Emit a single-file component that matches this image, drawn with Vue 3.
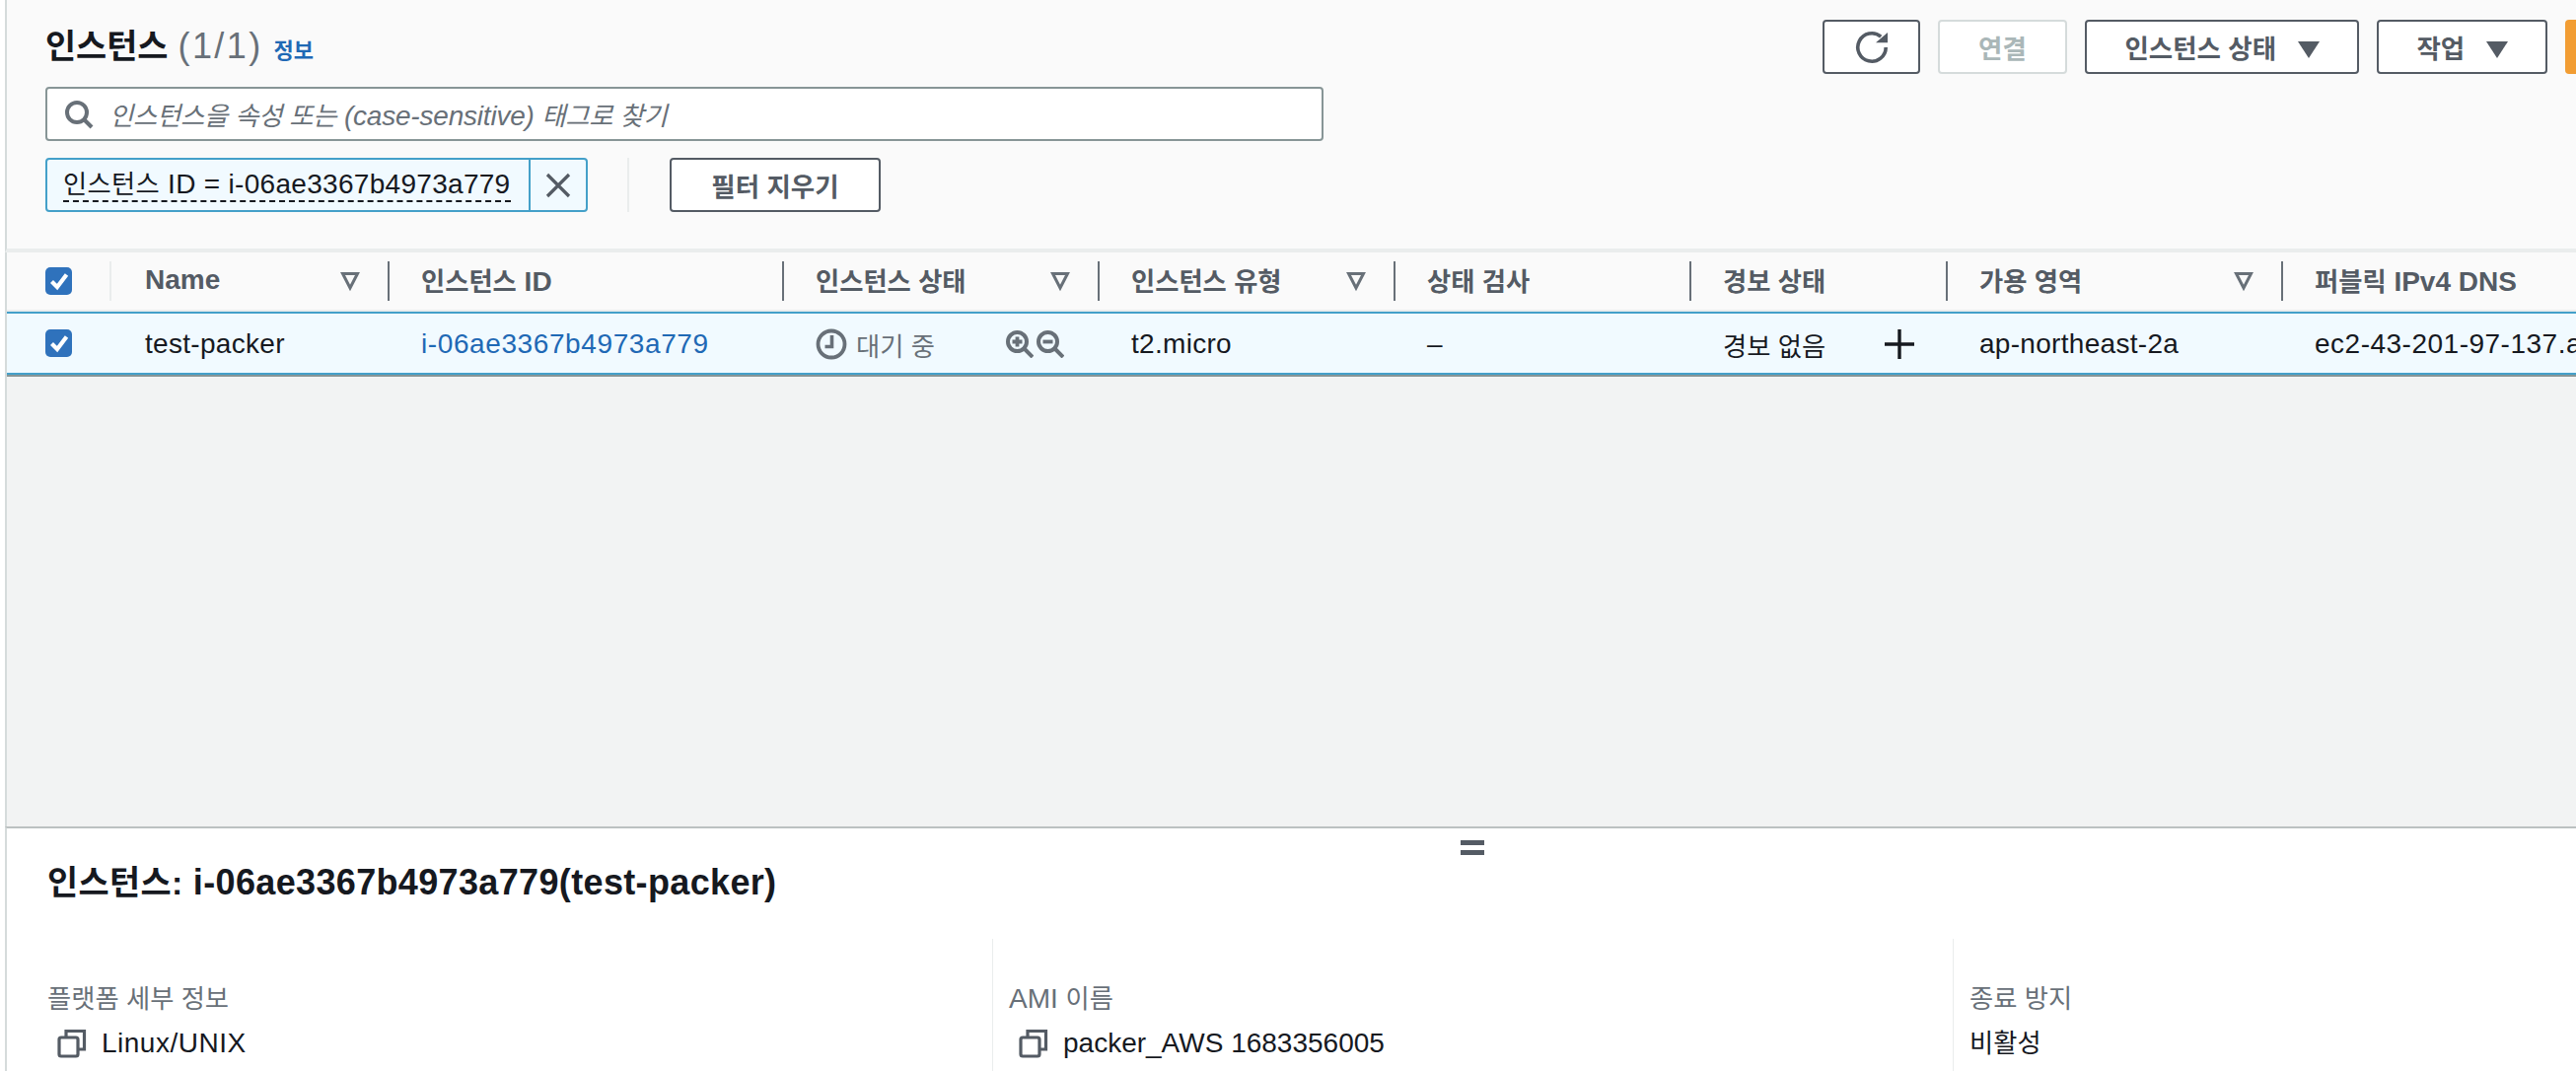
<script setup>
const columns = [
  { lat: 'Name', sort: true },
  { ko: '인스턴스', lat: ' ID' },
  { ko: '인스턴스 상태', sort: true },
  { ko: '인스턴스 유형', sort: true },
  { ko: '상태 검사' },
  { ko: '경보 상태' },
  { ko: '가용 영역', sort: true },
  { ko: '퍼블릭', lat: ' IPv4 DNS' },
]
</script>

<template>
  <div class="page">
    <section class="top">
      <div class="title-row">
        <div class="title">
          <h1><span class="ko">인스턴스</span> <span class="count">(1/1)</span></h1>
          <a class="info">정보</a>
        </div>
        <div class="actions">
          <button class="btn icon-btn" aria-label="새로 고침">
            <svg width="36" height="36" viewBox="0 0 36 36" fill="none">
              <path d="M32.2 18a14.2 14.2 0 1 1-5-10.8" stroke="#545b64" stroke-width="3.6" />
              <path d="M22 13.3h12V3z" fill="#545b64" />
            </svg>
          </button>
          <button class="btn disabled connect">연결</button>
          <button class="btn state">인스턴스 상태 <i class="caret"></i></button>
          <button class="btn act">작업 <i class="caret"></i></button>
          <button class="launch"></button>
        </div>
      </div>

      <div class="search">
        <svg width="32" height="32" viewBox="0 0 32 32" fill="none">
          <circle cx="14" cy="14" r="10" stroke="#687078" stroke-width="4" />
          <path d="M21 21l8 8" stroke="#687078" stroke-width="4" />
        </svg>
        <span><span class="ko">인스턴스을 속성 또는</span> (case-sensitive) <span class="ko">태그로 찾기</span></span>
      </div>

      <div class="filters">
        <div class="chip">
          <span class="chip-text"><span><span class="ko">인스턴스</span> ID = i-06ae3367b4973a779</span></span>
          <span class="chip-x">
            <svg width="28" height="28" viewBox="0 0 28 28" fill="none">
              <path d="M3 3l22 22M25 3L3 25" stroke="#545b64" stroke-width="3.2" />
            </svg>
          </span>
        </div>
        <i class="filter-divider"></i>
        <button class="btn clear">필터 지우기</button>
      </div>
    </section>

    <section class="table">
      <div class="grid head">
        <div class="cell check-cell">
          <span class="checkbox"><svg width="20" height="20" viewBox="0 0 20 20" fill="none"><path d="M2.5 10.5l5.5 5.5L17.5 3.5" stroke="#fff" stroke-width="4.2" /></svg></span>
        </div>
        <div v-for="c in columns" :key="(c.ko || '') + (c.lat || '')" class="cell head-cell">
          <span class="head-label"><span v-if="c.ko" class="ko">{{ c.ko }}</span>{{ c.lat }}</span>
          <svg v-if="c.sort" class="sort" width="20" height="22" viewBox="0 0 20 22" fill="none">
            <path d="M2.5 3.5h15L10 18z" stroke="#687078" stroke-width="3" />
          </svg>
        </div>
      </div>

      <div class="grid row">
        <div class="cell check-cell">
          <span class="checkbox"><svg width="20" height="20" viewBox="0 0 20 20" fill="none"><path d="M2.5 10.5l5.5 5.5L17.5 3.5" stroke="#fff" stroke-width="4.2" /></svg></span>
        </div>
        <div class="cell body-cell">test-packer</div>
        <div class="cell body-cell link">i-06ae3367b4973a779</div>
        <div class="cell body-cell status">
          <svg width="32" height="32" viewBox="0 0 32 32" fill="none">
            <circle cx="16" cy="16" r="13.5" stroke="#687078" stroke-width="3.8" />
            <path d="M16.5 7v11.5h-7" stroke="#687078" stroke-width="3.6" />
          </svg>
          <span class="pending ko">대기 중</span>
          <span class="zooms">
            <svg width="28" height="28" viewBox="0 0 28 28" fill="none">
              <circle cx="11.5" cy="11.5" r="9.5" stroke="#687078" stroke-width="4" />
              <path d="M18 18l9 9" stroke="#687078" stroke-width="4" />
              <path d="M6.5 11.5h10M11.5 6.5v10" stroke="#687078" stroke-width="3.8" />
            </svg>
            <svg width="28" height="28" viewBox="0 0 28 28" fill="none">
              <circle cx="11.5" cy="11.5" r="9.5" stroke="#687078" stroke-width="4" />
              <path d="M18 18l9 9" stroke="#687078" stroke-width="4" />
              <path d="M6.5 11.5h10" stroke="#687078" stroke-width="3.8" />
            </svg>
          </span>
        </div>
        <div class="cell body-cell">t2.micro</div>
        <div class="cell body-cell">–</div>
        <div class="cell body-cell alarm">
          <span class="ko">경보 없음</span>
          <svg width="30" height="30" viewBox="0 0 30 30" fill="none">
            <path d="M15 0v30M0 15h30" stroke="#16191f" stroke-width="3.4" />
          </svg>
        </div>
        <div class="cell body-cell">ap-northeast-2a</div>
        <div class="cell body-cell dns">ec2-43-201-97-137.ap-northeast-2.compute.amazonaws.com</div>
      </div>
      <div class="empty"></div>
    </section>

    <section class="detail">
      <div class="handle"><i></i><i></i></div>
      <h2><span class="ko">인스턴스:</span> i-06ae3367b4973a779(test-packer)</h2>
      <div class="detail-cols">
        <div class="detail-col first">
          <div class="label ko">플랫폼 세부 정보</div>
          <div class="value copy">
            <svg width="30" height="30" viewBox="0 0 30 30" fill="none">
              <rect x="2" y="9" width="19" height="19" rx="2" stroke="#545b64" stroke-width="3.2" />
              <path d="M9 9V2.5h18.5V21H21" stroke="#545b64" stroke-width="3.2" />
            </svg>
            <span class="linux">Linux/UNIX</span>
          </div>
        </div>
        <div class="detail-col second">
          <div class="label">AMI <span class="ko">이름</span></div>
          <div class="value copy">
            <svg width="30" height="30" viewBox="0 0 30 30" fill="none">
              <rect x="2" y="9" width="19" height="19" rx="2" stroke="#545b64" stroke-width="3.2" />
              <path d="M9 9V2.5h18.5V21H21" stroke="#545b64" stroke-width="3.2" />
            </svg>
            <span>packer_AWS 1683356005</span>
          </div>
        </div>
        <div class="detail-col third">
          <div class="label ko">종료 방지</div>
          <div class="value ko">비활성</div>
        </div>
      </div>
    </section>
  </div>
</template>

<style>
html, body { margin: 0; overflow: hidden; background: #fff; }
</style>

<style scoped>
.page {
  width: 2612px;
  height: 1086px;
  overflow: hidden;
  box-sizing: border-box;
  padding-left: 5px;
  background: #fff;
  font-family: "Liberation Sans", "Noto Sans CJK KR", sans-serif;
  font-size: 28px;
  color: #16191f;
  display: flex;
  flex-direction: column;
}
.ko { font-size: 0.94em; }
.page > section { border-left: 2px solid #d5dbdb; }
.top {
  height: 256px;
  box-sizing: border-box;
  background: #fafafa;
  padding: 20px 0 0 39px;
  border-bottom: 4px solid #eaeded;
  flex: none;
}
.title-row { display: flex; justify-content: space-between; height: 68px; }
.title { display: flex; align-items: baseline; gap: 11px; padding-top: 4px; }
h1 { margin: 0; font-size: 36px; line-height: 46px; font-weight: 400; white-space: pre; }
h1 .ko { font-weight: 700; }
.count { font-weight: 400; color: #687078; letter-spacing: 2.4px; }
.info { font-size: 22px; font-weight: 700; color: #1f69b5; }
.actions { display: flex; gap: 18px; height: 55px; }
button {
  font-family: inherit;
  padding: 0;
  box-sizing: border-box;
}
.btn {
  height: 55px;
  background: #fff;
  border: 2px solid #545b64;
  border-radius: 4px;
  color: #545b64;
  font-size: 26.5px;
  font-weight: 700;
  white-space: nowrap;
}
.icon-btn { width: 99px; display: flex; align-items: center; justify-content: center; }
.connect { width: 131px; }
.disabled { color: #aab7b8; border-color: #d5dbdb; }
.state { width: 278px; }
.act { width: 173px; }
.caret {
  display: inline-block;
  width: 0;
  height: 0;
  margin-left: 14px;
  border-left: 11px solid transparent;
  border-right: 11px solid transparent;
  border-top: 17px solid #545b64;
}
.launch {
  width: 22px;
  margin-right: -11px;
  height: 55px;
  border: 0;
  border-radius: 4px 0 0 4px;
  background: #f29d33;
}
.search {
  width: 1296px;
  height: 55px;
  box-sizing: border-box;
  display: flex;
  align-items: center;
  gap: 15px;
  padding-left: 16px;
  background: #fff;
  border: 2px solid #879596;
  border-radius: 4px;
  color: #687078;
  font-style: italic;
  white-space: nowrap;
  letter-spacing: -0.2px;
}
.filters { display: flex; align-items: stretch; margin-top: 17px; height: 55px; }
.chip {
  width: 550px;
  box-sizing: border-box;
  display: flex;
  background: #f1faff;
  border: 2px solid #44a0c9;
  border-radius: 4px;
}
.chip-text {
  width: 490px;
  box-sizing: border-box;
  padding-left: 16px;
  display: flex;
  align-items: center;
  border-right: 2px solid #44a0c9;
  white-space: nowrap;
  letter-spacing: 0.3px;
}
.chip-text > span { border-bottom: 2px dashed #16191f; line-height: 32px; }
.chip-x { flex: 1; display: flex; align-items: center; justify-content: center; }
.filter-divider { width: 2px; margin: 0 41px 0 40px; background: #eaeded; }
.clear { width: 214px; }
.grid {
  display: grid;
  grid-template-columns: 106px 280px 400px 320px 300px 300px 260px 340px 299px;
}
.head { height: 58px; background: #fafafa; border-bottom: 2px solid #eaeded; align-items: center; flex: none; }
.cell { min-width: 0; box-sizing: border-box; padding-left: 34px; }
.check-cell { padding-left: 39px; display: flex; align-items: center; }
.checkbox {
  width: 27px;
  height: 28px;
  border-radius: 5px;
  background: #2f72bc;
  display: flex;
  align-items: center;
  justify-content: center;
}
.head > .check-cell { height: 40px; border-right: 2px solid #eaeded; }
.head-cell {
  height: 40px;
  display: flex;
  align-items: center;
  justify-content: space-between;
  padding-left: 32px;
  padding-right: 28px;
  border-left: 2px solid #687078;
  color: #545b64;
  font-weight: 700;
  white-space: nowrap;
}
.head-label { margin-bottom: 3px; }
.head-cell:nth-child(2) { border-left: 0; padding-left: 34px; }
.sort { flex: none; }
.row {
  height: 64px;
  box-sizing: border-box;
  background: #f1faff;
  border-top: 2px solid #44a0c9;
  border-bottom: 2px solid #44a0c9;
  box-shadow: 0 2px 0 #879596;
  align-items: center;
  position: relative;
  flex: none;
}
.body-cell { white-space: nowrap; display: flex; align-items: center; height: 40px; padding-top: 2px; letter-spacing: 0.3px; }
.link { color: #1f69b5; letter-spacing: 0.6px; }
.status { gap: 9px; letter-spacing: 0; }
.pending { color: #687078; }
.zooms { display: flex; margin-left: auto; margin-right: 34px; gap: 3px; }
.alarm { justify-content: space-between; padding-right: 32px; letter-spacing: 0; }
.dns { overflow: hidden; padding-right: 0; letter-spacing: 0.5px; }
.table { display: flex; flex-direction: column; height: 582px; background: #f2f3f3; flex: none; box-sizing: border-box; }
.empty { flex: 1; }
.detail {
  flex: 1;
  border-top: 2px solid #bcc1c1;
  background: #fff;
  position: relative;
}
.handle {
  position: absolute;
  left: 1474px;
  top: 12px;
  width: 24px;
  display: flex;
  flex-direction: column;
  gap: 5px;
}
.handle i { display: block; height: 5px; background: #545b64; }
h2 { margin: 0; padding: 34px 0 0 41px; font-size: 36px; line-height: 42px; font-weight: 700; letter-spacing: 0.35px; }
.detail-cols {
  display: grid;
  grid-template-columns: 999px 974px 1fr;
  margin-top: 36px;
  height: 134px;
}
.detail-col { box-sizing: border-box; padding-top: 43px; }
.first { padding-left: 41px; }
.second, .third { border-left: 1px solid #eaeded; padding-left: 16px; }
.label { color: #687078; line-height: 36px; }
.value { margin-top: 9px; line-height: 36px; white-space: nowrap; }
.copy { display: flex; align-items: center; gap: 15px; padding-left: 10px; }
.linux { letter-spacing: 0.5px; }
</style>
